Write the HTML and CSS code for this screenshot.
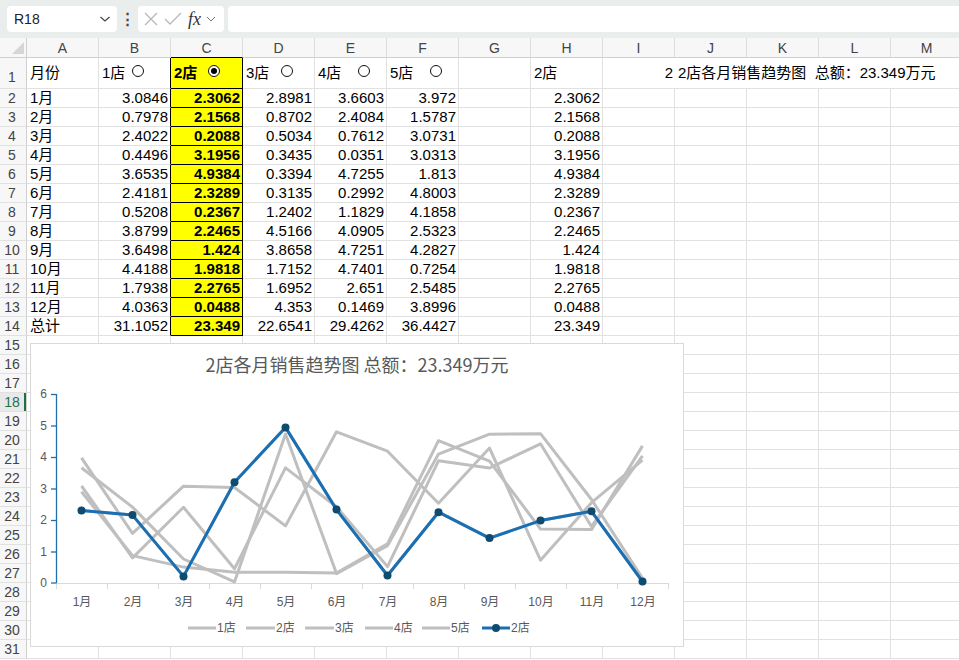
FILE: index.html
```html
<!DOCTYPE html>
<html>
<head>
<meta charset="utf-8">
<link rel="stylesheet" href="styles.css">
</head>
<body>
<div class="toolbar">
  <div class="namebox"><span>R18</span><svg class="chev" width="12" height="8" viewBox="0 0 12 8"><path d="M1.5 2 L6 6 L10.5 2" fill="none" stroke="#444" stroke-width="1.2"/></svg></div>
  <div class="dots">⋮</div>
  <div class="fnbox">
    <svg width="16" height="16" viewBox="0 0 16 16"><path d="M2 2 L14 14 M14 2 L2 14" stroke="#b8b8b8" stroke-width="1.3"/></svg>
    <svg width="18" height="16" viewBox="0 0 18 16"><path d="M1 8 L6 13 L17 2" fill="none" stroke="#b8b8b8" stroke-width="1.3"/></svg>
    <span class="fx">fx</span>
    <svg width="10" height="8" viewBox="0 0 10 8"><path d="M1 2 L5 6 L9 2" fill="none" stroke="#777" stroke-width="1"/></svg>
  </div>
  <div class="formula"></div>
</div>
<div class="sheet">
  <div class="row hdr">
    <div class="rh corner"><svg width="14" height="14" viewBox="0 0 14 14"><path d="M13 1 L13 13 L1 13 Z" fill="#d6d6d6"/></svg></div>
    <div class="ch">A</div><div class="ch">B</div><div class="ch kb">C</div><div class="ch">D</div><div class="ch">E</div><div class="ch">F</div><div class="ch">G</div><div class="ch">H</div><div class="ch">I</div><div class="ch">J</div><div class="ch">K</div><div class="ch">L</div><div class="ch">M</div>
  </div>
  <div class="row r1">
    <div class="rh">1</div>
    <div class="c">月份</div>
    <div class="c k">1店<span class="radio rb"></span></div>
    <div class="c y yb">2店<span class="radio rc on"></span></div>
    <div class="c">3店<span class="radio rd"></span></div>
    <div class="c">4店<span class="radio re"></span></div>
    <div class="c">5店<span class="radio rf"></span></div>
    <div class="c"></div>
    <div class="c">2店</div>
    <div class="c n nb">2</div>
    <div class="c span4">2店各月销售趋势图&nbsp;&nbsp;总额：23.349万元</div>
  </div>
  <div class="row"><div class="rh">2</div><div class="c">1月</div><div class="c n k">3.0846</div><div class="c n y">2.3062</div><div class="c n">2.8981</div><div class="c n">3.6603</div><div class="c n">3.972</div><div class="c"></div><div class="c n">2.3062</div><div class="c"></div><div class="c"></div><div class="c"></div><div class="c"></div><div class="c"></div></div>
  <div class="row"><div class="rh">3</div><div class="c">2月</div><div class="c n k">0.7978</div><div class="c n y">2.1568</div><div class="c n">0.8702</div><div class="c n">2.4084</div><div class="c n">1.5787</div><div class="c"></div><div class="c n">2.1568</div><div class="c"></div><div class="c"></div><div class="c"></div><div class="c"></div><div class="c"></div></div>
  <div class="row"><div class="rh">4</div><div class="c">3月</div><div class="c n k">2.4022</div><div class="c n y">0.2088</div><div class="c n">0.5034</div><div class="c n">0.7612</div><div class="c n">3.0731</div><div class="c"></div><div class="c n">0.2088</div><div class="c"></div><div class="c"></div><div class="c"></div><div class="c"></div><div class="c"></div></div>
  <div class="row"><div class="rh">5</div><div class="c">4月</div><div class="c n k">0.4496</div><div class="c n y">3.1956</div><div class="c n">0.3435</div><div class="c n">0.0351</div><div class="c n">3.0313</div><div class="c"></div><div class="c n">3.1956</div><div class="c"></div><div class="c"></div><div class="c"></div><div class="c"></div><div class="c"></div></div>
  <div class="row"><div class="rh">6</div><div class="c">5月</div><div class="c n k">3.6535</div><div class="c n y">4.9384</div><div class="c n">0.3394</div><div class="c n">4.7255</div><div class="c n">1.813</div><div class="c"></div><div class="c n">4.9384</div><div class="c"></div><div class="c"></div><div class="c"></div><div class="c"></div><div class="c"></div></div>
  <div class="row"><div class="rh">7</div><div class="c">6月</div><div class="c n k">2.4181</div><div class="c n y">2.3289</div><div class="c n">0.3135</div><div class="c n">0.2992</div><div class="c n">4.8003</div><div class="c"></div><div class="c n">2.3289</div><div class="c"></div><div class="c"></div><div class="c"></div><div class="c"></div><div class="c"></div></div>
  <div class="row"><div class="rh">8</div><div class="c">7月</div><div class="c n k">0.5208</div><div class="c n y">0.2367</div><div class="c n">1.2402</div><div class="c n">1.1829</div><div class="c n">4.1858</div><div class="c"></div><div class="c n">0.2367</div><div class="c"></div><div class="c"></div><div class="c"></div><div class="c"></div><div class="c"></div></div>
  <div class="row"><div class="rh">9</div><div class="c">8月</div><div class="c n k">3.8799</div><div class="c n y">2.2465</div><div class="c n">4.5166</div><div class="c n">4.0905</div><div class="c n">2.5323</div><div class="c"></div><div class="c n">2.2465</div><div class="c"></div><div class="c"></div><div class="c"></div><div class="c"></div><div class="c"></div></div>
  <div class="row"><div class="rh">10</div><div class="c">9月</div><div class="c n k">3.6498</div><div class="c n y">1.424</div><div class="c n">3.8658</div><div class="c n">4.7251</div><div class="c n">4.2827</div><div class="c"></div><div class="c n">1.424</div><div class="c"></div><div class="c"></div><div class="c"></div><div class="c"></div><div class="c"></div></div>
  <div class="row"><div class="rh">11</div><div class="c">10月</div><div class="c n k">4.4188</div><div class="c n y">1.9818</div><div class="c n">1.7152</div><div class="c n">4.7401</div><div class="c n">0.7254</div><div class="c"></div><div class="c n">1.9818</div><div class="c"></div><div class="c"></div><div class="c"></div><div class="c"></div><div class="c"></div></div>
  <div class="row"><div class="rh">12</div><div class="c">11月</div><div class="c n k">1.7938</div><div class="c n y">2.2765</div><div class="c n">1.6952</div><div class="c n">2.651</div><div class="c n">2.5485</div><div class="c"></div><div class="c n">2.2765</div><div class="c"></div><div class="c"></div><div class="c"></div><div class="c"></div><div class="c"></div></div>
  <div class="row"><div class="rh">13</div><div class="c">12月</div><div class="c n k">4.0363</div><div class="c n y">0.0488</div><div class="c n">4.353</div><div class="c n">0.1469</div><div class="c n">3.8996</div><div class="c"></div><div class="c n">0.0488</div><div class="c"></div><div class="c"></div><div class="c"></div><div class="c"></div><div class="c"></div></div>
  <div class="row"><div class="rh">14</div><div class="c">总计</div><div class="c n k">31.1052</div><div class="c n y">23.349</div><div class="c n">22.6541</div><div class="c n">29.4262</div><div class="c n">36.4427</div><div class="c"></div><div class="c n">23.349</div><div class="c"></div><div class="c"></div><div class="c"></div><div class="c"></div><div class="c"></div></div>
  <div class="row"><div class="rh">15</div><div class="blank"></div></div>
  <div class="row"><div class="rh">16</div><div class="blank"></div></div>
  <div class="row"><div class="rh">17</div><div class="blank"></div></div>
  <div class="row"><div class="rh sel">18</div><div class="blank"></div></div>
  <div class="row"><div class="rh">19</div><div class="blank"></div></div>
  <div class="row"><div class="rh">20</div><div class="blank"></div></div>
  <div class="row"><div class="rh">21</div><div class="blank"></div></div>
  <div class="row"><div class="rh">22</div><div class="blank"></div></div>
  <div class="row"><div class="rh">23</div><div class="blank"></div></div>
  <div class="row"><div class="rh">24</div><div class="blank"></div></div>
  <div class="row"><div class="rh">25</div><div class="blank"></div></div>
  <div class="row"><div class="rh">26</div><div class="blank"></div></div>
  <div class="row"><div class="rh">27</div><div class="blank"></div></div>
  <div class="row"><div class="rh">28</div><div class="blank"></div></div>
  <div class="row"><div class="rh">29</div><div class="blank"></div></div>
  <div class="row"><div class="rh">30</div><div class="blank"></div></div>
  <div class="row"><div class="rh">31</div><div class="blank"></div></div>

  <div class="chart">
    <svg width="654" height="304" viewBox="0 0 654 304">
      <text x="327" y="29" text-anchor="middle" class="title">2店各月销售趋势图 总额：23.349万元</text>
      <g stroke="#d9d9d9" stroke-width="1">
        <line x1="26" y1="240.5" x2="639" y2="240.5"/>
        <line x1="26.5" y1="240" x2="26.5" y2="246"/><line x1="77.5" y1="240" x2="77.5" y2="246"/><line x1="128.5" y1="240" x2="128.5" y2="246"/><line x1="179.5" y1="240" x2="179.5" y2="246"/><line x1="230.5" y1="240" x2="230.5" y2="246"/><line x1="281.5" y1="240" x2="281.5" y2="246"/><line x1="332.5" y1="240" x2="332.5" y2="246"/><line x1="383.5" y1="240" x2="383.5" y2="246"/><line x1="434.5" y1="240" x2="434.5" y2="246"/><line x1="485.5" y1="240" x2="485.5" y2="246"/><line x1="536.5" y1="240" x2="536.5" y2="246"/><line x1="587.5" y1="240" x2="587.5" y2="246"/><line x1="638.5" y1="240" x2="638.5" y2="246"/>
      </g>
      <g stroke="#1f6fae" stroke-width="1.3">
        <line x1="26.5" y1="51" x2="26.5" y2="240"/>
        <line x1="21" y1="51.5" x2="26.5" y2="51.5"/><line x1="21" y1="83" x2="26.5" y2="83"/><line x1="21" y1="114.5" x2="26.5" y2="114.5"/><line x1="21" y1="146" x2="26.5" y2="146"/><line x1="21" y1="177.5" x2="26.5" y2="177.5"/><line x1="21" y1="209" x2="26.5" y2="209"/><line x1="21" y1="240" x2="26.5" y2="240"/>
      </g>
      <g class="lbl" text-anchor="end">
        <text x="17" y="55">6</text><text x="17" y="87">5</text><text x="17" y="118">4</text><text x="17" y="150">3</text><text x="17" y="181">2</text><text x="17" y="213">1</text><text x="17" y="244">0</text>
      </g>
      <g class="lbl" text-anchor="middle">
        <text x="52" y="263">1月</text><text x="103" y="263">2月</text><text x="154" y="263">3月</text><text x="205" y="263">4月</text><text x="256" y="263">5月</text><text x="307" y="263">6月</text><text x="358" y="263">7月</text><text x="409" y="263">8月</text><text x="460" y="263">9月</text><text x="511" y="263">10月</text><text x="562" y="263">11月</text><text x="613" y="263">12月</text>
      </g>
      <g fill="none" stroke="#bfbfbf" stroke-width="3" stroke-linejoin="round">
        <polyline points="51.5,142.8 102.5,214.9 153.5,164.3 204.5,225.8 255.5,124.9 306.5,163.8 357.5,223.6 408.5,117.8 459.5,125.0 510.5,100.8 561.5,183.5 612.5,112.9"/>
        <polyline points="51.5,148.7 102.5,212.6 153.5,224.1 204.5,229.2 255.5,229.3 306.5,230.1 357.5,200.9 408.5,97.7 459.5,118.2 510.5,186.0 561.5,186.6 612.5,102.9"/>
        <polyline points="51.5,124.7 102.5,164.1 153.5,216.0 204.5,238.9 255.5,91.1 306.5,230.6 357.5,202.7 408.5,111.1 459.5,91.2 510.5,90.7 561.5,156.5 612.5,235.4"/>
        <polyline points="51.5,114.9 102.5,190.3 153.5,143.2 204.5,144.5 255.5,182.9 306.5,88.8 357.5,108.2 408.5,160.2 459.5,105.1 510.5,217.2 561.5,159.7 612.5,117.2"/>
        <polyline points="51.5,167.4 102.5,172.1 153.5,233.4 204.5,139.3 255.5,84.4 306.5,166.6 357.5,232.5 408.5,169.2 459.5,195.1 510.5,177.6 561.5,168.3 612.5,238.5"/>
      </g>
      <polyline fill="none" stroke="#1a6fb3" stroke-width="3" stroke-linejoin="round" points="51.5,167.4 102.5,172.1 153.5,233.4 204.5,139.3 255.5,84.4 306.5,166.6 357.5,232.5 408.5,169.2 459.5,195.1 510.5,177.6 561.5,168.3 612.5,238.5"/>
      <g fill="#0f4a6f">
        <circle cx="51.5" cy="167.4" r="4"/><circle cx="102.5" cy="172.1" r="4"/><circle cx="153.5" cy="233.4" r="4"/><circle cx="204.5" cy="139.3" r="4"/><circle cx="255.5" cy="84.4" r="4"/><circle cx="306.5" cy="166.6" r="4"/><circle cx="357.5" cy="232.5" r="4"/><circle cx="408.5" cy="169.2" r="4"/><circle cx="459.5" cy="195.1" r="4"/><circle cx="510.5" cy="177.6" r="4"/><circle cx="561.5" cy="168.3" r="4"/><circle cx="612.5" cy="238.5" r="4"/>
      </g>
      <g stroke="#bfbfbf" stroke-width="3">
        <line x1="158" y1="285" x2="186" y2="285"/>
        <line x1="216" y1="285" x2="245" y2="285"/>
        <line x1="275" y1="285" x2="304" y2="285"/>
        <line x1="335" y1="285" x2="363" y2="285"/>
        <line x1="392" y1="285" x2="420" y2="285"/>
      </g>
      <line x1="452" y1="285" x2="480" y2="285" stroke="#1a6fb3" stroke-width="3"/>
      <circle cx="466" cy="285" r="4" fill="#0f4a6f"/>
      <g class="lbl">
        <text x="187" y="289">1店</text><text x="246" y="289">2店</text><text x="305" y="289">3店</text><text x="364" y="289">4店</text><text x="421" y="289">5店</text><text x="481" y="289">2店</text>
      </g>
    </svg>
  </div>
</div>
</body>
</html>
```
FILE: styles.css
```css
* { box-sizing: border-box; }
body {
  margin: 0;
  width: 959px;
  height: 660px;
  overflow: hidden;
  background: #fff;
  font-family: "Liberation Sans", "Noto Sans CJK SC", sans-serif;
  color: #000;
}
.toolbar {
  height: 38px;
  background: #e9edeb;
  display: flex;
  align-items: center;
  padding-left: 7px;
}
.namebox {
  width: 110px;
  height: 26px;
  background: #fff;
  border-radius: 4px;
  display: flex;
  align-items: center;
  justify-content: space-between;
  padding: 0 6px 0 7px;
  font-size: 14px;
  color: #222;
}
.dots {
  width: 21px;
  text-align: center;
  font-size: 15px;
  font-weight: bold;
  color: #444;
}
.fnbox {
  width: 86px;
  height: 26px;
  background: #fff;
  border-radius: 4px;
  display: flex;
  align-items: center;
  gap: 5px;
  padding-left: 5px;
}
.fx {
  font-family: "Liberation Serif", serif;
  font-style: italic;
  font-size: 18px;
  color: #333;
  margin-left: 1px;
}
.formula {
  margin-left: 4px;
  flex: 1;
  height: 26px;
  background: #fff;
  border-radius: 4px 0 0 4px;
}
.sheet { position: relative; }
.row {
  display: grid;
  grid-template-columns: 27px repeat(13, 72px);
  height: 19px;
}
.row.hdr { height: 20px; background: #f7f7f7; }
.row.r1 { height: 31px; }
.rh {
  border-right: 1px solid #cfcfcf;
  border-bottom: 1px solid #e1e1e1;
  background: #f7f7f7;
  font-size: 14px;
  color: #444;
  display: flex;
  align-items: center;
  justify-content: center;
  padding-right: 2px;
}
.r1 .rh { align-items: flex-end; padding-bottom: 3px; }
.rh.corner { border-bottom: 1px solid #cfcfcf; justify-content: flex-end; align-items: flex-end; padding: 0 1px 2px 0; }
.rh.sel {
  color: #1e7145;
  background: #e8e8e8;
  box-shadow: inset -2px 0 0 #1e7145;
}
.ch {
  border-right: 1px solid #dcdcdc;
  border-bottom: 1px solid #cfcfcf;
  font-size: 14px;
  color: #444;
  display: flex;
  align-items: center;
  justify-content: center;
}
.ch.kb { border-bottom-color: #000; }
.c {
  border-right: 1px solid #e1e1e1;
  border-bottom: 1px solid #e1e1e1;
  font-size: 15px;
  line-height: 18px;
  white-space: nowrap;
  display: flex;
  align-items: flex-end;
  padding: 0 2px 0 3px;
}
.r1 .c { padding-bottom: 6px; align-items: flex-end; }
.c.n { justify-content: flex-end; }
.c.k { border-right-color: #000; }
.c.y {
  background: #ffff00;
  font-weight: bold;
  border-right-color: #000;
  border-bottom-color: #000;
}
.c.nb { border-right: none; }
.c.span4 { grid-column: span 4; border-right: none; overflow: visible; padding-left: 3px; }
.radio {
  width: 12px;
  height: 12px;
  border: 1px solid #111;
  border-radius: 50%;
  background: #fff;
  align-self: center;
  margin-top: 2px;
  position: relative;
  flex: none;
}
.radio.on::after {
  content: "";
  position: absolute;
  left: 2px;
  top: 2px;
  width: 6px;
  height: 6px;
  border-radius: 50%;
  background: #000;
}
.rb { margin-left: 7px; }
.rc { margin-left: 11px; }
.rd { margin-left: 12px; }
.re { margin-left: 17px; }
.rf { margin-left: 17px; }
.blank {
  grid-column: span 13;
  border-bottom: 1px solid #e1e1e1;
  background-image: linear-gradient(to right, transparent 71px, #e1e1e1 71px);
  background-size: 72px 100%;
}
.chart {
  position: absolute;
  left: 30px;
  top: 305px;
  width: 654px;
  height: 304px;
  background: #fff;
  border: 1px solid #d9d9d9;
}
.chart svg { display: block; position: absolute; left: -1px; top: -1px; }
.title {
  font-family: "Noto Sans CJK SC", sans-serif;
  font-size: 18px;
  fill: #595959;
}
.lbl text, .lbl {
  font-family: "Liberation Sans", "Noto Sans CJK SC", sans-serif;
  font-size: 12px;
  fill: #595959;
}
```
